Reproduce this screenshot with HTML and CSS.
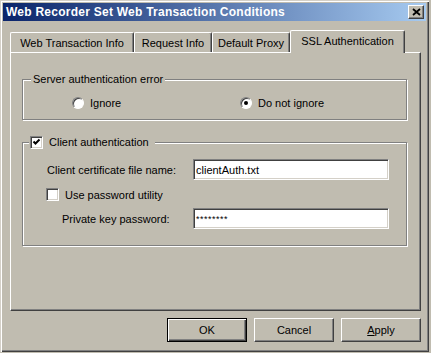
FILE: index.html
```html
<!DOCTYPE html>
<html lang="en">
<head>
  <meta charset="UTF-8" />
  <title>Web Recorder Set Web Transaction Conditions</title>
  <link rel="stylesheet" href="styles.css">
</head>
<body>
  <div class="window">
    <div class="titlebar">
      <span class="title">Web Recorder Set Web Transaction Conditions</span>
      <span class="close">
        <svg width="9" height="8" viewBox="0 0 9 8"><path d="M1 1 L8 7 M8 1 L1 7" stroke="#000" stroke-width="1.8" fill="none"/></svg>
      </span>
    </div>

    <div class="tabs">
      <div class="tab tab-info">Web Transaction Info</div>
      <div class="tab tab-request">Request Info</div>
      <div class="tab tab-proxy">Default Proxy</div>
      <div class="tab tab-ssl active">SSL Authentication</div>
    </div>

    <div class="panel">
      <fieldset class="group group-server">
        <legend>Server authentication error</legend>
        <div class="radio-row">
          <label class="radio radio-ignore"><span class="radio-mark"></span>Ignore</label>
          <label class="radio"><span class="radio-mark checked"><span class="radio-dot"></span></span>Do not ignore</label>
        </div>
      </fieldset>

      <fieldset class="group group-client">
        <legend class="check-legend">
          <span class="check">
            <svg width="11" height="11" viewBox="0 0 11 11"><path d="M2.5 4.5 L4.5 6.5 L8.5 2.5" stroke="#000" stroke-width="2" fill="none"/></svg>
          </span>Client authentication
        </legend>
        <div class="field-row">
          <span class="field-label">Client certificate file name:</span>
          <div class="textbox">clientAuth.txt</div>
        </div>
        <div class="check-row">
          <span class="check"></span>Use password utility
        </div>
        <div class="field-row sub">
          <span class="field-label">Private key password:</span>
          <div class="textbox password">********</div>
        </div>
      </fieldset>
    </div>

    <div class="buttons">
      <div class="btn default">OK</div>
      <div class="btn">Cancel</div>
      <div class="btn"><u>A</u>pply</div>
    </div>
  </div>
</body>
</html>
```
FILE: styles.css
```css
body {
  margin: 0;
  background: #c0bcb0;
  font-family: "Liberation Sans", Arial, sans-serif;
  font-size: 11px;
  color: #000;
}
.window {
  width: 429px;
  height: 352px;
  box-sizing: border-box;
  padding: 3px 3px 0 3px;
  background: #c0bcb0;
  box-shadow: inset 1px 1px 0 #d4d0c8, inset 2px 2px 0 #fff, inset -1px -1px 0 #404040, inset -2px -2px 0 #808080;
}
.titlebar {
  height: 18px;
  display: flex;
  align-items: center;
  justify-content: space-between;
  padding: 0 2px 0 3px;
  background: linear-gradient(to right, #0a246a, #a6caf0);
}
.title {
  color: #fff;
  font-weight: bold;
  font-size: 12px;
  letter-spacing: 0.25px;
}
.close {
  width: 16px;
  height: 14px;
  box-sizing: border-box;
  display: flex;
  align-items: center;
  justify-content: center;
  background: #c0bcb0;
  border: 1px solid;
  border-color: #fff #404040 #404040 #fff;
  box-shadow: inset -1px -1px 0 #808080;
}
.close svg {
  display: block;
}

/* tabs */
.tabs {
  display: flex;
  align-items: flex-end;
  height: 22px;
  margin: 9px 0 0 7px;
}
.tab {
  height: 20px;
  box-sizing: border-box;
  display: flex;
  align-items: center;
  justify-content: center;
  border: 1px solid;
  border-bottom: none;
  border-color: #fff #404040 #fff #fff;
  border-radius: 2px 2px 0 0;
  box-shadow: inset -1px 0 0 #808080;
  background: #c0bcb0;
}
.tab-info { width: 124px; }
.tab-request { width: 78px; }
.tab-proxy { width: 78px; }
.tab-ssl { width: 115px; }
.tab.active {
  height: 23px;
  margin-bottom: -1px;
  padding-bottom: 2px;
  position: relative;
  z-index: 1;
}

/* page panel */
.panel {
  width: 411px;
  height: 259px;
  box-sizing: border-box;
  margin-left: 7px;
  padding: 20px 12px 0 11px;
  border: 1px solid;
  border-color: #fff #404040 #404040 #fff;
  box-shadow: inset -1px -1px 0 #808080;
}
.group {
  width: 385px;
  box-sizing: border-box;
  margin: 0;
  padding: 0;
  border: 1px solid #808080;
  box-shadow: 1px 1px 0 #fff, inset 1px 1px 0 #fff;
}
.group legend {
  margin-left: 8px;
  padding: 0 2px;
  line-height: 13px;
  background: #c0bcb0;
}
.group-server {
  padding-bottom: 10px;
}
.radio-row {
  display: flex;
  height: 13px;
  margin-top: 10px;
  padding-left: 49px;
}
.radio {
  display: flex;
  align-items: center;
}
.radio-ignore {
  width: 168px;
}
.radio-mark {
  width: 12px;
  height: 12px;
  box-sizing: border-box;
  margin-right: 6px;
  display: flex;
  align-items: center;
  justify-content: center;
  border-radius: 50%;
  background: #fff;
  border: 1px solid;
  border-color: #808080 #fff #fff #808080;
  box-shadow: inset 1px 1px 0 #404040;
}
.radio-dot {
  width: 4px;
  height: 4px;
  border-radius: 50%;
  background: #000;
}

.group-client {
  margin-top: 16px;
  padding-bottom: 16px;
}
.group .check-legend {
  display: flex;
  align-items: center;
  margin-left: 6px;
  padding: 0 6px 0 1px;
}
.check {
  width: 13px;
  height: 13px;
  box-sizing: border-box;
  margin-right: 6px;
  background: #fff;
  border: 1px solid;
  border-color: #808080 #fff #fff #808080;
  box-shadow: inset 1px 1px 0 #404040, inset -1px -1px 0 #d4d0c8;
}
.check svg {
  display: block;
}
.field-row {
  display: grid;
  grid-template-columns: 170px 196px;
  align-items: center;
  margin-top: 10px;
}
.field-row .field-label {
  padding-left: 24px;
}
.field-row.sub {
  margin-top: 7px;
}
.field-row.sub .field-label {
  padding-left: 39px;
}
.textbox {
  height: 21px;
  box-sizing: border-box;
  display: flex;
  align-items: center;
  padding-left: 2px;
  background: #fff;
  border: 1px solid;
  border-color: #808080 #fff #fff #808080;
  box-shadow: inset 1px 1px 0 #404040, inset -1px -1px 0 #d4d0c8;
}
.textbox.password {
  font-size: 9px;
  letter-spacing: 0.5px;
}
.check-row {
  display: flex;
  align-items: center;
  height: 13px;
  margin-top: 8px;
  padding-left: 23px;
}

/* dialog buttons */
.buttons {
  display: flex;
  justify-content: flex-end;
  gap: 7px;
  width: 411px;
  margin: 7px 0 0 7px;
}
.btn {
  width: 80px;
  height: 24px;
  box-sizing: border-box;
  display: flex;
  align-items: center;
  justify-content: center;
  border: 1px solid;
  border-color: #fff #404040 #404040 #fff;
  box-shadow: inset -1px -1px 0 #808080;
}
.btn.default {
  border-color: #000;
  box-shadow: inset 1px 1px 0 #fff, inset -1px -1px 0 #404040, inset -2px -2px 0 #808080;
}
```
